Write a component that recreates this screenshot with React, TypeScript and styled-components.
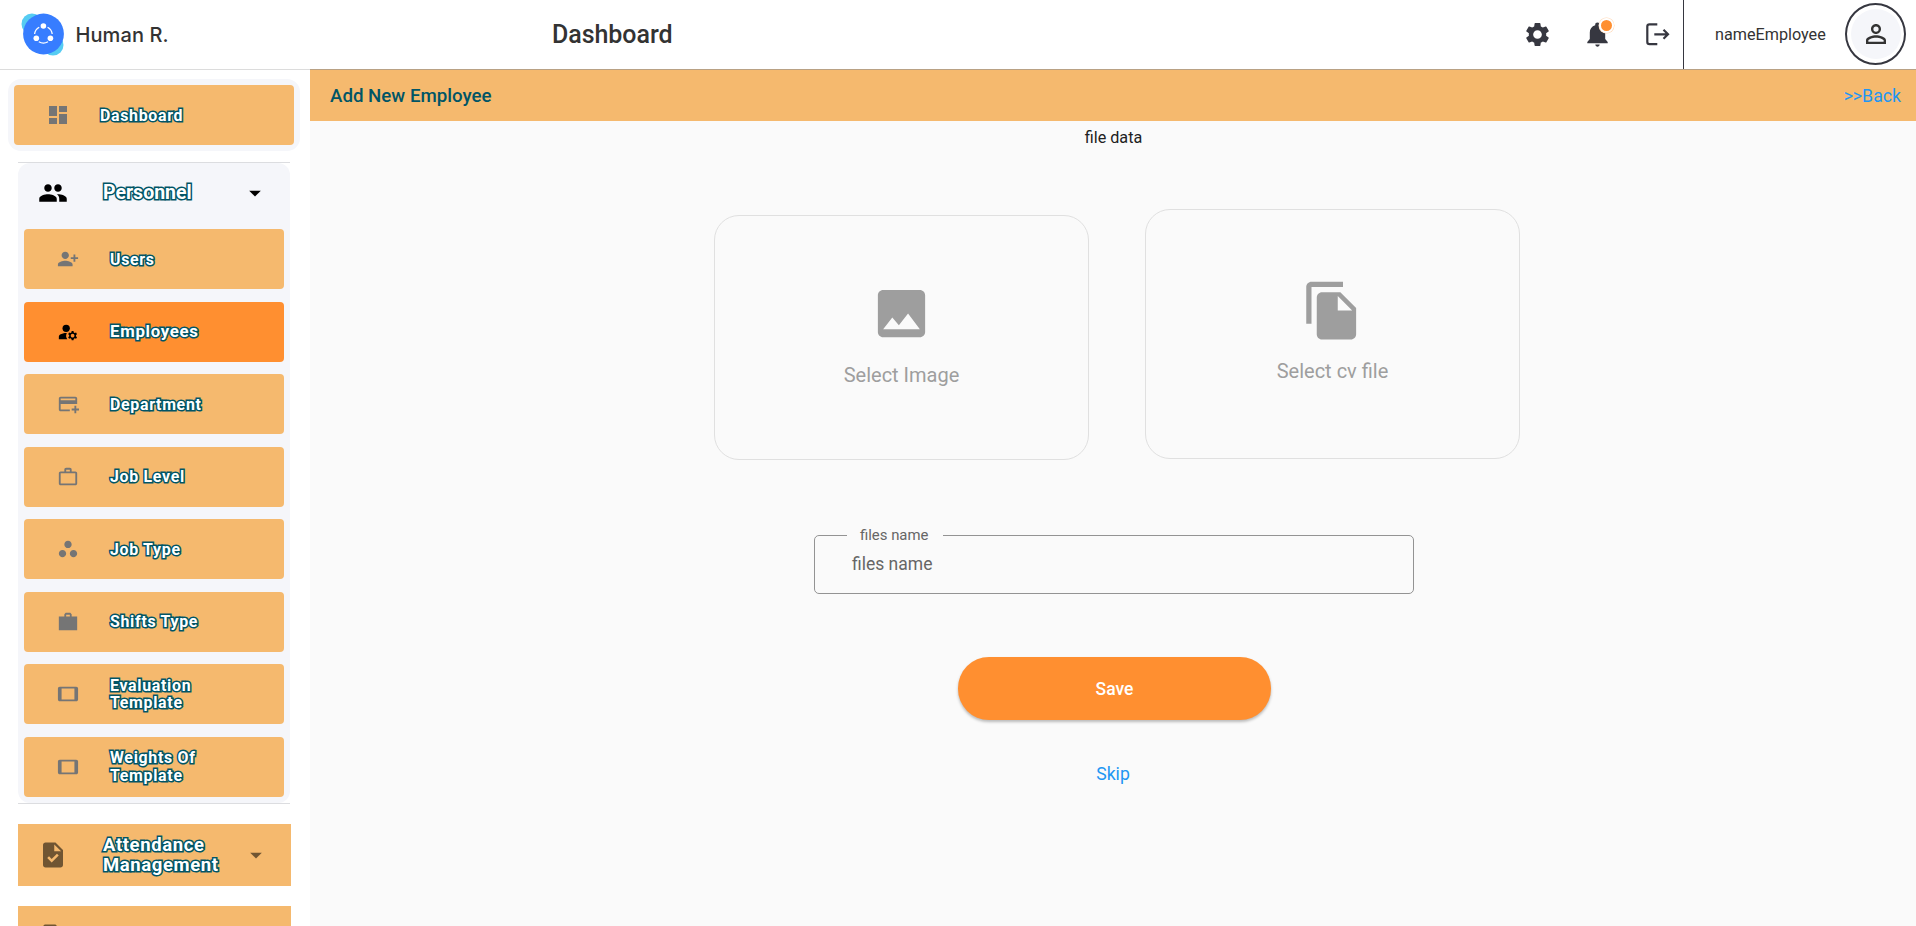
import React from 'react';
import styled, { createGlobalStyle, css } from 'styled-components';
import {
  MdAddCard,
  MdArrowDropDown,
  MdDashboard,
  MdFileCopy,
  MdImage,
  MdManageAccounts,
  MdPeople,
  MdPersonAddAlt1,
  MdPersonOutline,
  MdSettings,
  MdTablet,
  MdTask,
  MdWorkOutline,
  MdWorkspaces,
} from 'react-icons/md';

const colors = {
  ink: '#363740',
  teal: '#005566',
  sand: '#f5b96e',
  orange: '#ff8f30',
  mist: '#f5f6fa',
  blue: '#2196f3',
  grey: '#9e9e9e',
};

const GlobalStyle = createGlobalStyle`
  * { box-sizing: border-box; }
  body {
    margin: 0;
    overflow: hidden;
    background: #fff;
    font-family: Roboto, "Liberation Sans", sans-serif;
  }
  svg { display: block; flex: none; }
`;

const Page = styled.div`
  display: flex;
  flex-direction: column;
  height: 926px;
  overflow: hidden;
`;

const Header = styled.header`
  display: flex;
  align-items: center;
  flex: none;
  height: 69px;
  background: #fff;
  color: ${colors.ink};
`;

const Brand = styled.div`
  display: flex;
  align-items: center;
  width: 552px;
  padding-left: 20px;
  gap: 10.5px;
  font: 500 20px/28px Inter, sans-serif;
  letter-spacing: 0.1px;
  color: #333;
`;

const Title = styled.h1`
  flex: 1;
  margin: 0;
  font-size: 25px;
  font-weight: 500;
  letter-spacing: -0.05px;
  color: #333;
`;

const Actions = styled.div`
  display: flex;
  align-items: center;
  gap: 31px;
  height: 69px;
  padding-right: 11px;
  border-right: 1px solid ${colors.ink};
`;

const BellWrap = styled.div`
  position: relative;
`;

const Dot = styled.span`
  position: absolute;
  top: -2px;
  right: -2px;
  width: 15px;
  height: 15px;
  border: 2px solid #fff;
  border-radius: 50%;
  background: ${colors.orange};
  box-shadow: 0 0 0 0.5px #ffd9b8;
`;

const Account = styled.div`
  display: flex;
  align-items: center;
  justify-content: space-between;
  width: 232px;
  padding: 0 10px 0 31px;
  font-size: 16.2px;
  color: #333;
`;

const Avatar = styled.div`
  display: flex;
  align-items: center;
  justify-content: center;
  width: 61px;
  height: 62px;
  margin-bottom: 1px;
  border: 2px solid ${colors.ink};
  border-radius: 50%;
  padding: 3px;
`;

const AvatarFill = styled.div`
  display: flex;
  align-items: center;
  justify-content: center;
  width: 50px;
  height: 50px;
  border-radius: 50%;
  background: ${colors.mist};
`;

const Body = styled.div`
  display: flex;
  flex: 1;
  min-height: 0;
`;

const Sidebar = styled.nav`
  width: 310px;
  flex: none;
  padding: 9px 0 0;
  border-top: 1px solid #dcdcdc;
  overflow: hidden;
`;

const outlined = css`
  color: #fff;
  -webkit-text-stroke: 3px ${colors.teal};
  paint-order: stroke fill;
`;

const Frame = styled.div`
  width: 292px;
  margin-left: 8px;
  padding: 6px;
  border-radius: 13px;
  background: ${colors.mist};
`;

const Entry = styled.div<{ $active?: boolean; $indent: number; $label: number }>`
  display: grid;
  grid-template-columns: ${(p) => p.$label}px 1fr;
  align-items: center;
  height: 60px;
  padding-left: ${(p) => p.$indent}px;
  border-radius: 4px;
  background: ${(p) => (p.$active ? colors.orange : colors.sand)};
  color: ${(p) => (p.$active ? '#000' : '#757575')};
`;

const EntryLabel = styled.span<{ $active?: boolean }>`
  max-width: 110px;
  padding-top: 0.5px;
  font-size: ${(p) => (p.$active ? 16.8 : 15.9)}px;
  line-height: 17.5px;
  font-weight: 700;
  letter-spacing: 0.7px;
  ${outlined}
`;

const Group = styled.section`
  width: 272px;
  margin: 11px 0 0 18px;
  border: solid #dcdde0;
  border-width: 1px 0;
`;

const GroupBody = styled.div`
  padding: 1px 6px 6px;
  border-radius: 12px;
  background: ${colors.mist};
`;

const GroupHead = styled.div<{ $muted?: boolean }>`
  display: grid;
  grid-template-columns: 65px 1fr 24px;
  align-items: center;
  height: 57px;
  padding: 0 19px 0 14px;
  color: ${(p) => (p.$muted ? 'rgba(0,0,0,.54)' : '#000')};
`;

const GroupLabel = styled.span<{ $wide?: boolean }>`
  padding-top: 1px;
  font-size: ${(p) => (p.$wide ? 18.5 : 19.5)}px;
  line-height: 20px;
  font-weight: 700;
  letter-spacing: ${(p) => (p.$wide ? 0.6 : 0)}px;
  ${outlined}
`;

const Items = styled.div`
  display: flex;
  flex-direction: column;
  gap: 12.5px;
  padding-top: 8px;
`;

const Collapsed = styled.section`
  width: 272.5px;
  height: 62.5px;
  margin: 20px 0 0 18px;
  background: ${colors.sand};
  ${GroupHead} {
    height: 62px;
    padding: 0 25px 0 20px;
  }
`;

const Main = styled.main`
  display: flex;
  flex: 1;
  flex-direction: column;
  align-items: center;
  background: #fafafa;
`;

const Bar = styled.div`
  display: flex;
  align-items: center;
  justify-content: space-between;
  align-self: stretch;
  height: 52px;
  padding: 0 15px 0 20px;
  border-top: 1px solid #b9a184;
  background: ${colors.sand};
`;

const BarTitle = styled.h2`
  margin: 0;
  font-size: 18.7px;
  font-weight: 500;
  color: ${colors.teal};
`;

const Link = styled.a<{ $size: number }>`
  font-size: ${(p) => p.$size}px;
  line-height: 20px;
  color: ${colors.blue};
`;

const Caption = styled.p`
  margin: 7px 0 0 1px;
  font-size: 16.2px;
  line-height: 20px;
  color: #212121;
`;

const Cards = styled.div`
  display: flex;
  align-items: center;
  gap: 56px;
  margin: 60px 0 0 8px;
  height: 251px;
`;

const Card = styled.div<{ $height: number; $top: number; $gap: number; $drop: number }>`
  display: flex;
  flex-direction: column;
  align-items: center;
  gap: ${(p) => p.$gap}px;
  width: 375px;
  height: ${(p) => p.$height}px;
  margin-top: ${(p) => p.$drop}px;
  padding-top: ${(p) => p.$top}px;
  border: 1px solid #e0e0e0;
  border-radius: 25px;
  font-size: 20px;
  line-height: 24px;
  color: ${colors.grey};
`;

const Field = styled.fieldset`
  width: 600px;
  height: 68px;
  margin: 67px 0 0 2px;
  padding: 10px 0 0 37px;
  border: 1px solid #939393;
  border-radius: 5px;
  font-size: 17.5px;
  line-height: 20px;
  color: #666;
`;

const Legend = styled.legend`
  margin-left: -5px;
  padding: 0 15px 0 13px;
  font-size: 14.9px;
  line-height: 18px;
`;

const SaveButton = styled.button`
  width: 313px;
  height: 63px;
  margin: 63px 0 44px 2px;
  padding: 0 0 0 1px;
  border: 0;
  border-radius: 31px;
  background: ${colors.orange};
  box-shadow: 0 2px 3px rgba(0, 0, 0, 0.26);
  font: 500 17.5px/20px Roboto, sans-serif;
  color: #fff;
`;

const Logo = () => (
  <svg width="45" height="45" viewBox="0 0 45 45">
    <circle cx="12" cy="12" r="10.5" fill="#56ccf2" />
    <circle cx="33" cy="33" r="10.5" fill="#56ccf2" />
    <circle cx="23.5" cy="22" r="20.4" fill="#377dff" />
    <g fill="none" stroke="#fff" strokeWidth="1.3">
      <path d="M14.6 22a8.900 8.900 0 0 1 4.600-6.800M27.600 15.200a8.900 8.900 0 0 1 4.600 6.800M18.800 29.800a8.900 8.900 0 0 0 9.200 0" />
    </g>
    <g fill="#fff">
      <circle cx="23.400" cy="14" r="2.800" />
      <circle cx="16.300" cy="26.300" r="2.800" />
      <circle cx="30.400" cy="26.300" r="2.800" />
    </g>
  </svg>
);

const Bell = () => (
  <svg width="29" height="29" viewBox="0 0 29 29" fill="currentColor">
    <path d="M14.500 2.500c-1.400 0-2.300.9-2.300 2.200v.6C8.700 6.300 6.800 9 6.800 12.400v6.600l-2.500 3v1.200h20.400V22l-2.500-3v-6.600c0-3.400-1.900-6.100-5.400-7.100v-.6c0-1.300-.9-2.200-2.300-2.200zM12.300 24.500h4.400c-.2 1.400-1 2.200-2.200 2.200s-2-.8-2.200-2.200z" />
  </svg>
);

const Exit = () => (
  <svg width="29" height="29" viewBox="0 0 29 29" fill="none" stroke="currentColor" strokeWidth="2.200">
    <path d="M14.300 4.300H6.500Q4.300 4.300 4.300 6.500V22Q4.300 24.200 6.500 24.200H14.300" />
    <path d="M11.300 14.300H24.500M20.500 9.800L25 14.300L20.500 18.800" />
  </svg>
);

const Briefcase = () => (
  <svg width="22" height="22" viewBox="0 0 24 24" fill="currentColor">
    <path d="M22 6h-6V3.500L14.500 2h-5L8 3.500V6H2v15h20zM14 6h-4V4h4z" />
  </svg>
);

const entries: { label: string; icon: React.ReactNode; active?: boolean }[] = [
  { label: 'Users', icon: <MdPersonAddAlt1 size={22} /> },
  { label: 'Employees', icon: <MdManageAccounts size={22} />, active: true },
  { label: 'Department', icon: <MdAddCard size={22} /> },
  { label: 'Job Level', icon: <MdWorkOutline size={22} /> },
  { label: 'Job Type', icon: <MdWorkspaces size={22} /> },
  { label: 'Shifts Type', icon: <Briefcase /> },
  { label: 'Evaluation Template', icon: <MdTablet size={22} /> },
  { label: 'Weights Of Template', icon: <MdTablet size={22} /> },
];

export default function App() {
  return (
    <Page>
      <GlobalStyle />
      <Header>
        <Brand>
          <Logo />
          Human R.
        </Brand>
        <Title>Dashboard</Title>
        <Actions>
          <MdSettings size={29} />
          <BellWrap>
            <Bell />
            <Dot />
          </BellWrap>
          <Exit />
        </Actions>
        <Account>
          nameEmployee
          <Avatar>
            <AvatarFill>
              <MdPersonOutline size={30} />
            </AvatarFill>
          </Avatar>
        </Account>
      </Header>
      <Body>
        <Sidebar>
          <Frame>
            <Entry $indent={32} $label={54}>
              <MdDashboard size={24} />
              <EntryLabel>Dashboard</EntryLabel>
            </Entry>
          </Frame>
          <Group>
            <GroupBody>
              <GroupHead>
                <MdPeople size={30} />
                <GroupLabel>Personnel</GroupLabel>
                <MdArrowDropDown size={28} />
              </GroupHead>
              <Items>
                {entries.map((e) => (
                  <Entry key={e.label} $active={e.active} $indent={33} $label={53}>
                    {e.icon}
                    <EntryLabel $active={e.active}>{e.label}</EntryLabel>
                  </Entry>
                ))}
              </Items>
            </GroupBody>
          </Group>
          <Collapsed>
            <GroupHead $muted>
              <MdTask size={30} />
              <GroupLabel $wide>Attendance Management</GroupLabel>
              <MdArrowDropDown size={28} />
            </GroupHead>
          </Collapsed>
          <Collapsed>
            <GroupHead $muted>
              <MdTask size={30} />
            </GroupHead>
          </Collapsed>
        </Sidebar>
        <Main>
          <Bar>
            <BarTitle>Add New Employee</BarTitle>
            <Link $size={17.7}>&gt;&gt;Back</Link>
          </Bar>
          <Caption>file data</Caption>
          <Cards>
            <Card $height={245} $top={66} $gap={18} $drop={7}>
              <MdImage size={63} />
              Select Image
            </Card>
            <Card $height={250} $top={69} $gap={17} $drop={0}>
              <MdFileCopy size={63} />
              Select cv file
            </Card>
          </Cards>
          <Field>
            <Legend>files name</Legend>
            files name
          </Field>
          <SaveButton>Save</SaveButton>
          <Link $size={17.6}>Skip</Link>
        </Main>
      </Body>
    </Page>
  );
}
